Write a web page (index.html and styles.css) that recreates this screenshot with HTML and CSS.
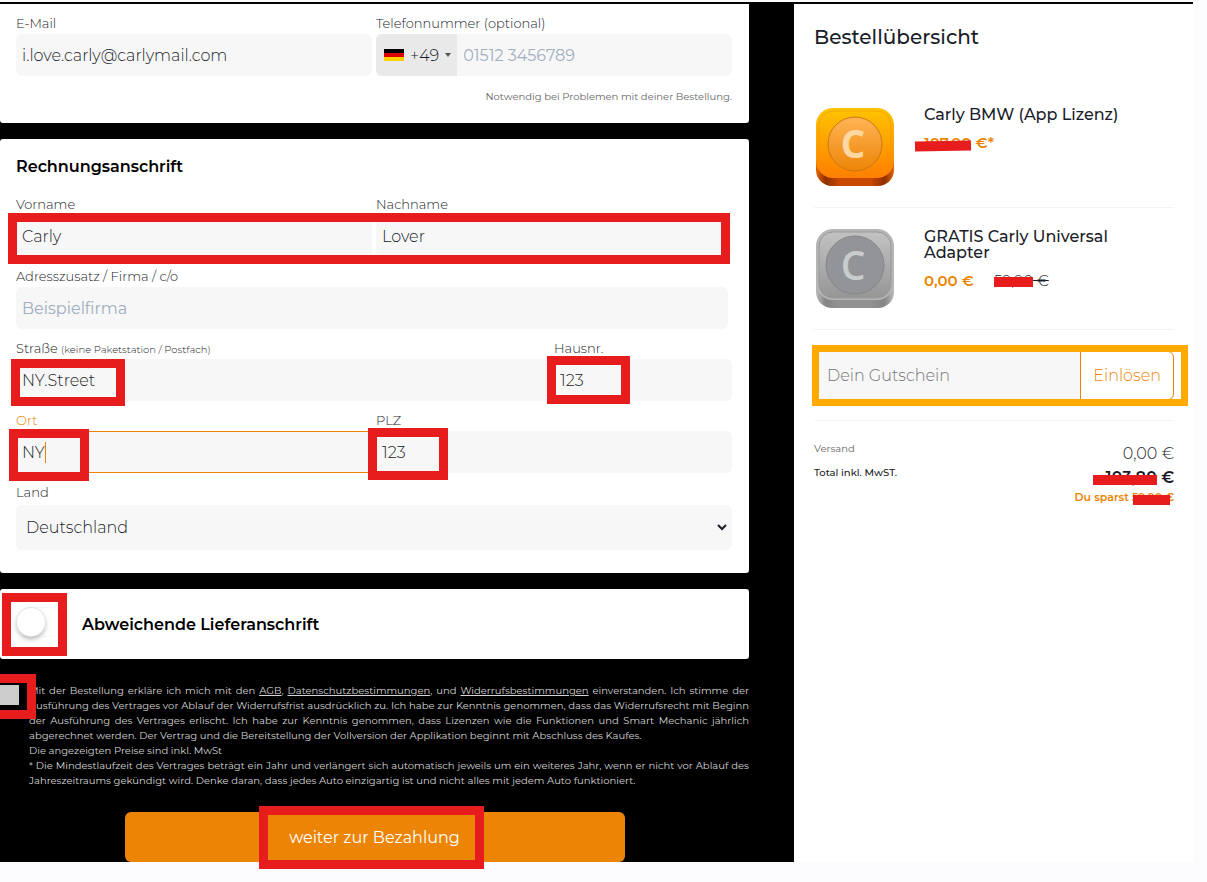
FILE: index.html
```html
<!DOCTYPE html>
<html lang="de">
<head>
    <meta charset="UTF-8">
    <meta name="viewport" content="width=device-width, initial-scale=1.0">
    <title>Carly - Bestellung</title>
    <link rel="stylesheet" href="styles.css">
</head>
<body>
<div class="checkout">
    <form class="checkout-form" id="checkoutForm">
        <section class="card card-contact">
            <div class="row row-half">
                <div class="field">
                    <label for="email">E-Mail</label>
                    <input type="email" id="email" value="i.love.carly@carlymail.com">
                </div>
                <div class="field">
                    <label for="phone">Telefonnummer (optional)</label>
                    <div class="phone">
                        <button type="button" class="phone-code" aria-label="Ländervorwahl">
                            <svg width="20" height="12" viewBox="0 0 20 12">
                                <rect width="20" height="4" fill="#000"/>
                                <rect y="4" width="20" height="4" fill="#d00"/>
                                <rect y="8" width="20" height="4" fill="#ffce00"/>
                            </svg>
                            <span>+49</span>
                            <svg width="6" height="4" viewBox="0 0 6 4"><path d="M0 0h6L3 4z" fill="#555"/></svg>
                        </button>
                        <input type="tel" id="phone" placeholder="01512 3456789">
                    </div>
                </div>
            </div>
            <p class="hint">Notwendig bei Problemen mit deiner Bestellung.</p>
        </section>

        <section class="card card-billing">
            <h2>Rechnungsanschrift</h2>
            <div class="row row-half">
                <div class="field">
                    <label for="firstname">Vorname</label>
                    <input type="text" id="firstname" value="Carly">
                </div>
                <div class="field">
                    <label for="lastname">Nachname</label>
                    <input type="text" id="lastname" value="Lover">
                </div>
                <span class="mark mark-name"></span>
            </div>
            <div class="row row-company">
                <div class="field">
                    <label for="company">Adresszusatz / Firma / c/o</label>
                    <input type="text" id="company" placeholder="Beispielfirma">
                </div>
            </div>
            <div class="row row-street">
                <div class="field">
                    <label for="street">Straße <small>(keine Paketstation / Postfach)</small></label>
                    <input type="text" id="street" value="NY.Street">
                    <span class="mark mark-street"></span>
                </div>
                <div class="field">
                    <label for="number">Hausnr.</label>
                    <input type="text" id="number" value="123">
                    <span class="mark mark-number"></span>
                </div>
            </div>
            <div class="row row-half">
                <div class="field active">
                    <label for="city">Ort</label>
                    <input type="text" id="city" value="NY">
                    <span class="caret"></span>
                    <span class="mark mark-city"></span>
                </div>
                <div class="field">
                    <label for="zip">PLZ</label>
                    <input type="text" id="zip" value="123">
                    <span class="mark mark-zip"></span>
                </div>
            </div>
            <div class="row">
                <div class="field field-country">
                    <label for="country">Land</label>
                    <select id="country">
                        <option>Deutschland</option>
                    </select>
                    <svg class="chevron" width="10" height="7" viewBox="0 0 10 7"><path d="M1 1l4 4 4-4" fill="none" stroke="#1a1d29" stroke-width="2"/></svg>
                </div>
            </div>
        </section>

        <section class="card card-delivery">
            <input type="checkbox" class="toggle" id="delivery">
            <label for="delivery">Abweichende Lieferanschrift</label>
            <span class="mark mark-toggle"></span>
        </section>

        <div class="terms">
            <input type="checkbox" id="terms" aria-label="Bedingungen akzeptieren">
            <div class="terms-text">
                <p>Mit der Bestellung erkläre ich mich mit den <a href="#">AGB</a>, <a href="#">Datenschutzbestimmungen</a>, und <a href="#">Widerrufsbestimmungen</a> einverstanden. Ich stimme der Ausführung des Vertrages vor Ablauf der Widerrufsfrist ausdrücklich zu. Ich habe zur Kenntnis genommen, dass das Widerrufsrecht mit Beginn der Ausführung des Vertrages erlischt. Ich habe zur Kenntnis genommen, dass Lizenzen wie die Funktionen und Smart Mechanic jährlich abgerechnet werden. Der Vertrag und die Bereitstellung der Vollversion der Applikation beginnt mit Abschluss des Kaufes.</p>
                <p>Die angezeigten Preise sind inkl. MwSt</p>
                <p>* Die Mindestlaufzeit des Vertrages beträgt ein Jahr und verlängert sich automatisch jeweils um ein weiteres Jahr, wenn er nicht vor Ablauf des Jahreszeitraums gekündigt wird. Denke daran, dass jedes Auto einzigartig ist und nicht alles mit jedem Auto funktioniert.</p>
            </div>
            <span class="mark mark-terms"></span>
        </div>

        <div class="submit">
            <button type="submit" class="submit-button">weiter zur Bezahlung</button>
            <span class="mark mark-submit"></span>
        </div>
    </form>

    <aside class="summary">
        <h1>Bestellübersicht</h1>
        <article class="item">
            <svg class="item-icon" width="78" height="79" viewBox="0 0 78 79">
                <defs>
                    <linearGradient id="orangeTop" x1="0" y1="0" x2="0" y2="1">
                        <stop offset="0" stop-color="#ffc400"/><stop offset="1" stop-color="#ff7e00"/>
                    </linearGradient>
                    <linearGradient id="orangeSide">
                        <stop offset="0" stop-color="#e86500"/><stop offset=".12" stop-color="#8e2f00"/><stop offset=".3" stop-color="#c94800"/><stop offset=".7" stop-color="#c94800"/><stop offset=".88" stop-color="#8e2f00"/><stop offset="1" stop-color="#e86500"/>
                    </linearGradient>
                    <linearGradient id="orangeDisc" x1="0" y1="0" x2="0" y2="1">
                        <stop offset="0" stop-color="#ffb456"/><stop offset="1" stop-color="#ec8507"/>
                    </linearGradient>
                </defs>
                <rect y="9" width="78" height="70" rx="16" fill="url(#orangeSide)"/>
                <rect y="1" width="78" height="70" rx="17" fill="url(#orangeTop)"/>
                <rect x="3" y="4" width="72" height="63" rx="14" fill="none" stroke="#e79000" stroke-opacity=".5"/>
                <circle cx="39" cy="37" r="27" fill="url(#orangeDisc)" stroke="#c87818"/>
                <text x="37" y="51" class="item-letter" fill="#ffd7a0">C</text>
            </svg>
            <div class="item-info">
                <h3>Carly BMW (App Lizenz)</h3>
                <p class="price"><span class="censored censored-price">107,90</span> €*</p>
            </div>
        </article>
        <article class="item">
            <svg class="item-icon" width="78" height="79" viewBox="0 0 78 79">
                <defs>
                    <linearGradient id="grayTop" x1="0" y1="0" x2="0" y2="1">
                        <stop offset="0" stop-color="#c2c2c2"/><stop offset="1" stop-color="#969696"/>
                    </linearGradient>
                    <linearGradient id="graySide">
                        <stop offset="0" stop-color="#bbb"/><stop offset=".12" stop-color="#858585"/><stop offset=".3" stop-color="#929292"/><stop offset=".7" stop-color="#929292"/><stop offset=".88" stop-color="#858585"/><stop offset="1" stop-color="#bbb"/>
                    </linearGradient>
                </defs>
                <rect y="8" width="78" height="71" rx="16" fill="url(#graySide)"/>
                <rect width="78" height="71" rx="17" fill="#b5b5b5"/>
                <rect x="3" y="3" width="72" height="66" rx="14" fill="url(#grayTop)" stroke="#999"/>
                <circle cx="39" cy="36" r="29" fill="#939498" stroke="#858585"/>
                <text x="37" y="51" class="item-letter item-letter-light" fill="#cacbcd">C</text>
            </svg>
            <div class="item-info">
                <h3>GRATIS Carly Universal Adapter</h3>
                <p class="price">0,00 € <s><span class="censored">59,90</span> €</s></p>
            </div>
        </article>
        <div class="voucher">
            <input type="text" placeholder="Dein Gutschein" aria-label="Dein Gutschein">
            <button type="button">Einlösen</button>
            <span class="mark mark-voucher"></span>
        </div>
        <dl class="totals">
            <div class="total-row">
                <dt>Versand</dt>
                <dd>0,00 €</dd>
            </div>
            <div class="total-row total-sum">
                <dt>Total inkl. MwST.</dt>
                <dd><span class="censored censored-total">103,80</span> €</dd>
            </div>
        </dl>
        <p class="savings">Du sparst <span class="censored censored-savings">59,90</span> €</p>
    </aside>
</div>
</body>
</html>
```
FILE: styles.css
```css
:root {
    --orange: #ec8505;
    --mark: #e71c1c;
    --voucher: #ffaa00;
    --field: #f7f7f7;
    --text: #1a1d29;
    --line: #f3f3f3;
}
* {
    margin: 0;
    padding: 0;
    box-sizing: border-box;
}
body {
    font-family: 'Montserrat', 'Inter', sans-serif;
    font-size: 16px;
    font-weight: 300;
    color: var(--text);
    background: #fcfcfe;
    min-height: 100vh;
    padding: 2px 14px 20px 0;
}
input,
select,
button {
    font: inherit;
    color: inherit;
    border: none;
}
.checkout {
    display: grid;
    grid-template-columns: 199fr 100fr;
    border-top: 2px solid #000;
}
.checkout-form {
    background: #000;
    padding-right: 45px;
}

/* Cards and fields */
.card {
    position: relative;
    background: #fff;
    border-radius: 3px;
    padding: 0 17px 0 16px;
    margin-bottom: 16px;
}
.card-contact {
    padding-top: 10px;
    padding-bottom: 18px;
    border-top-left-radius: 0;
    border-top-right-radius: 0;
}
.card-billing {
    padding-top: 16px;
    padding-bottom: 23px;
}
.card h2 {
    font-size: 16px;
    font-weight: 600;
    line-height: 24px;
    color: #000;
    margin-bottom: 16px;
}
.row {
    display: grid;
    position: relative;
    gap: 4px;
}
.row + .row {
    margin-top: 10px;
}
.row-half {
    grid-template-columns: 1fr 1fr;
}
.row-street {
    grid-template-columns: 3fr 1fr;
}
.row-company {
    padding-right: 4px;
}
.field {
    position: relative;
    min-width: 0;
}
.field label {
    display: block;
    height: 18px;
    font-size: 13px;
    line-height: 18px;
    margin-bottom: 2px;
    white-space: nowrap;
}
.field small {
    font-size: 10px;
}
.field input,
.field select {
    display: block;
    width: 100%;
    height: 42px;
    padding: 0 6px;
    background: var(--field);
    border-radius: 6px;
    outline: none;
}
.field input::placeholder {
    font-weight: 400;
    color: #a0aec0;
}
.field.active label {
    color: var(--orange);
}
.field.active input {
    border: 1px solid var(--orange);
    border-radius: 0;
    padding: 0 5px;
}
.caret {
    position: absolute;
    left: 29px;
    bottom: 10px;
    width: 1px;
    height: 21px;
    background: var(--orange);
}
.field-country label {
    margin-bottom: 4px;
}
.field-country select {
    height: 45px;
    padding: 0 10px;
    appearance: none;
}
.chevron {
    position: absolute;
    right: 5px;
    bottom: 19px;
}
.phone {
    display: flex;
    background: var(--field);
    border-radius: 6px;
}
.phone-code {
    display: flex;
    align-items: center;
    gap: 6px;
    flex: none;
    padding: 0 6px 0 8px;
    background: #e9e9e9;
    border-radius: 6px 0 0 6px;
}
.hint {
    font-size: 10px;
    font-weight: 400;
    line-height: 16px;
    color: #666;
    text-align: right;
    margin-top: 13px;
}

/* Delivery toggle */
.card-delivery {
    display: flex;
    align-items: center;
    gap: 16px;
    height: 70px;
    margin-bottom: 24px;
}
.card-delivery label {
    font-weight: 600;
    color: #000;
}
.toggle {
    appearance: none;
    width: 50px;
    height: 30px;
    margin-bottom: 4px;
    border: 1px solid #f7f7f7;
    border-radius: 15px;
}
.toggle::before {
    content: '';
    display: block;
    width: 28px;
    height: 28px;
    border-radius: 50%;
    background: #fff;
    box-shadow: 0 0 0 1px #e4e4e4, 0 3px 5px rgba(0, 0, 0, 0.3);
}

/* Terms */
.terms {
    display: flex;
    position: relative;
    gap: 10px;
}
.terms input {
    appearance: none;
    flex: none;
    width: 19px;
    height: 20px;
    margin-top: 2px;
    background: #ccc;
}
.terms-text {
    font-size: 10px;
    font-weight: 400;
    line-height: 15px;
    color: #d4d4d4;
    text-align: justify;
}
.terms-text a {
    color: inherit;
}
.submit {
    display: flex;
    justify-content: center;
    position: relative;
    margin-top: 24px;
}
.submit-button {
    width: 100%;
    max-width: 500px;
    height: 50px;
    border-radius: 6px;
    background: var(--orange);
    color: #fff;
    font-weight: 400;
}

/* Highlight frames */
.mark {
    position: absolute;
    border: 9px solid var(--mark);
    pointer-events: none;
}
.mark-name {
    top: 18px;
    right: 2px;
    bottom: -7px;
    left: -8px;
}
.mark-street {
    top: 20px;
    left: -5px;
    width: 114px;
    height: 47px;
}
.mark-number {
    top: 17px;
    left: -7px;
    width: 83px;
    height: 48px;
}
.mark-city {
    top: 18px;
    left: -7px;
    width: 80px;
    height: 52px;
}
.mark-zip {
    top: 17px;
    left: -8px;
    width: 80px;
    height: 52px;
}
.mark-toggle {
    top: 4px;
    left: 2px;
    width: 65px;
    height: 63px;
}
.mark-terms {
    top: -9px;
    left: -10px;
    width: 46px;
    height: 45px;
}
.mark-submit {
    top: -6px;
    right: 6px;
    left: 0;
    width: 225px;
    height: 63px;
    margin: 0 auto;
}
.mark-voucher {
    top: -6px;
    right: -14px;
    bottom: -6px;
    left: -2px;
    border: 7px solid var(--voucher);
}

/* Order summary */
.summary {
    background: #fff;
    padding: 18px 19px 0 20px;
}
.summary h1 {
    font-size: 20px;
    font-weight: 500;
    line-height: 30px;
    margin-bottom: 34px;
}
.item {
    display: flex;
    gap: 30px;
    height: 122px;
    padding: 21px 0 0 2px;
    border-bottom: 1px solid var(--line);
}
.item-icon {
    flex: none;
}
.item-letter {
    font-family: 'Open Sans', sans-serif;
    font-size: 39px;
    font-weight: 700;
    text-anchor: middle;
}
.item-letter-light {
    font-weight: 600;
}
.item h3 {
    font-size: 16px;
    font-weight: 500;
    line-height: 16px;
}
.price {
    font-size: 15px;
    font-weight: 600;
    line-height: 20px;
    margin-top: 10px;
    color: var(--orange);
}
.price s {
    margin-left: 16px;
    font-weight: 300;
    color: var(--text);
}

/* Struck out amounts */
.censored {
    position: relative;
}
.censored::after {
    content: '';
    position: absolute;
    top: 6px;
    right: 0;
    left: 0;
    height: 10px;
    background: var(--mark);
}
.censored-price::after {
    top: 8px;
    left: -9px;
    transform: rotate(-1deg);
}
.censored-total::after {
    top: 7px;
    left: -12px;
}
.censored-savings::after {
    top: 5px;
    right: -8px;
    left: 1px;
}
.voucher {
    display: flex;
    position: relative;
    height: 49px;
    margin: 21px 0 20px;
}
.voucher input {
    flex: 1;
    min-width: 0;
    padding: 0 13px;
    background: var(--field);
}
.voucher input::placeholder {
    color: #757575;
}
.voucher button {
    padding: 0 12px;
    border: 1px solid var(--orange);
    border-radius: 0 6px 6px 0;
    background: #fff;
    color: var(--orange);
}
.totals {
    border-top: 1px solid var(--line);
    padding-top: 20px;
}
.total-row {
    display: flex;
    justify-content: space-between;
    height: 24px;
}
.total-row dt {
    font-size: 10px;
    line-height: 16px;
    font-weight: 400;
    color: #666;
}
.total-row dd {
    line-height: 26px;
}
.total-sum dt {
    font-weight: 500;
    color: var(--text);
}
.total-sum dd {
    font-weight: 600;
}
.savings {
    font-size: 11px;
    font-weight: 600;
    line-height: 16px;
    text-align: right;
    color: var(--orange);
}
```
